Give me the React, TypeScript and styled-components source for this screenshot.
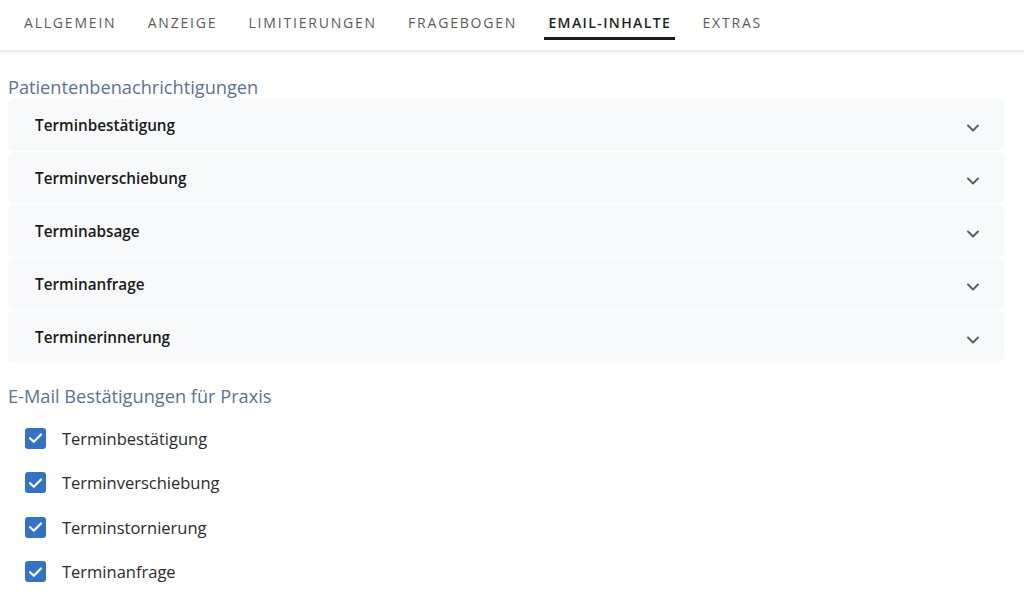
import React, {useState} from "react";
import styled, {createGlobalStyle} from "styled-components";

const GlobalStyles = createGlobalStyle`
    html, body {
        margin: 0;
        padding: 0;
        background: #ffffff;
        font-family: 'Open Sans', 'Noto Sans', sans-serif;
    }
`;

const TABS = ['Allgemein', 'Anzeige', 'Limitierungen', 'Fragebogen', 'Email-Inhalte', 'Extras'];
const NOTIFICATIONS = ['Terminbestätigung', 'Terminverschiebung', 'Terminabsage', 'Terminanfrage', 'Terminerinnerung'];
const CONFIRMATIONS = ['Terminbestätigung', 'Terminverschiebung', 'Terminstornierung', 'Terminanfrage'];

const Page = styled.div`
    width: 1024px;
    min-height: 613px;
`;

const TabBar = styled.nav`
    display: flex;
    gap: 23.2px;
    height: 50px;
    padding-left: 20px;
    box-shadow: 0 1px 3px rgba(0, 0, 0, 0.12);
    border-bottom: 1px solid #ececec;
`;

const Tab = styled.button<{ $active?: boolean }>`
    position: relative;
    border: none;
    background: none;
    padding: 0 4px 6px;
    font-family: 'Open Sans', sans-serif;
    font-size: 14px;
    font-weight: ${p => p.$active ? 600 : 500};
    letter-spacing: ${p => p.$active ? '1.4px' : '1.8px'};
    text-transform: uppercase;
    color: ${p => p.$active ? '#1f1f1f' : '#5a5a5a'};
    cursor: pointer;

    &::after {
        content: '';
        position: absolute;
        left: 0;
        right: 0;
        bottom: 10px;
        height: 3px;
        background: ${p => p.$active ? '#1a1a1a' : 'transparent'};
    }
`;

const Content = styled.main`
    padding: 25px 20px 0 8px;
`;

const SectionTitle = styled.h2`
    margin: 0;
    font-size: 18.2px;
    font-weight: 400;
    line-height: 23px;
    color: #5b7390;
`;

const Accordion = styled.div`
    display: flex;
    flex-direction: column;
    gap: 1px;
    margin-bottom: 22px;
`;

const Item = styled.div`
    display: flex;
    align-items: center;
    justify-content: space-between;
    height: 52px;
    padding: 0 24px 0 27px;
    background: #f8f9fa;
    border-radius: 6px;
    cursor: pointer;
`;

const ItemTitle = styled.span`
    font-size: 15.3px;
    font-weight: 600;
    color: #1a1a1a;
`;

const Chevron = () => (
    <svg width="14" height="10" viewBox="0 0 14 10" style={{marginTop: 6}}>
        <path d="M2 2.5 L7 7.5 L12 2.5" fill="none" stroke="#5e5e5e" strokeWidth="2" strokeLinecap="round" strokeLinejoin="round"/>
    </svg>
);

const CheckList = styled.div`
    display: flex;
    flex-direction: column;
    gap: 20.5px;
    padding: 18px 0 0 17px;
`;

const CheckRow = styled.label`
    display: flex;
    align-items: center;
    gap: 16px;
    font-size: 16.5px;
    color: #2b2b2b;
    height: 24px;
    cursor: pointer;
`;

const Box = styled.span<{ $checked: boolean }>`
    display: inline-flex;
    align-items: center;
    justify-content: center;
    width: 21px;
    height: 21px;
    border-radius: 3px;
    background: ${p => p.$checked ? '#3672c4' : '#fff'};
    border: ${p => p.$checked ? 'none' : '2px solid #888'};
    box-sizing: border-box;
`;

const Check = () => (
    <svg width="15" height="12" viewBox="0 0 15 12">
        <path d="M2 6.2 L5.8 9.8 L13 2.5" fill="none" stroke="#fff" strokeWidth="2.2" strokeLinecap="round" strokeLinejoin="round"/>
    </svg>
);

export default function App() {
    const [active, setActive] = useState(4);
    const [checked, setChecked] = useState<boolean[]>(CONFIRMATIONS.map(() => true));

    return (
        <Page>
            <GlobalStyles/>
            <TabBar>
                {TABS.map((t, i) => (
                    <Tab key={t} $active={i === active} onClick={() => setActive(i)}>{t}</Tab>
                ))}
            </TabBar>
            <Content>
                <SectionTitle>Patientenbenachrichtigungen</SectionTitle>
                <Accordion>
                    {NOTIFICATIONS.map(n => (
                        <Item key={n}>
                            <ItemTitle>{n}</ItemTitle>
                            <Chevron/>
                        </Item>
                    ))}
                </Accordion>
                <SectionTitle>E-Mail Bestätigungen für Praxis</SectionTitle>
                <CheckList>
                    {CONFIRMATIONS.map((c, i) => (
                        <CheckRow key={c} onClick={() => setChecked(s => s.map((v, j) => j === i ? !v : v))}>
                            <Box $checked={checked[i]}>{checked[i] && <Check/>}</Box>
                            {c}
                        </CheckRow>
                    ))}
                </CheckList>
            </Content>
        </Page>
    );
}
